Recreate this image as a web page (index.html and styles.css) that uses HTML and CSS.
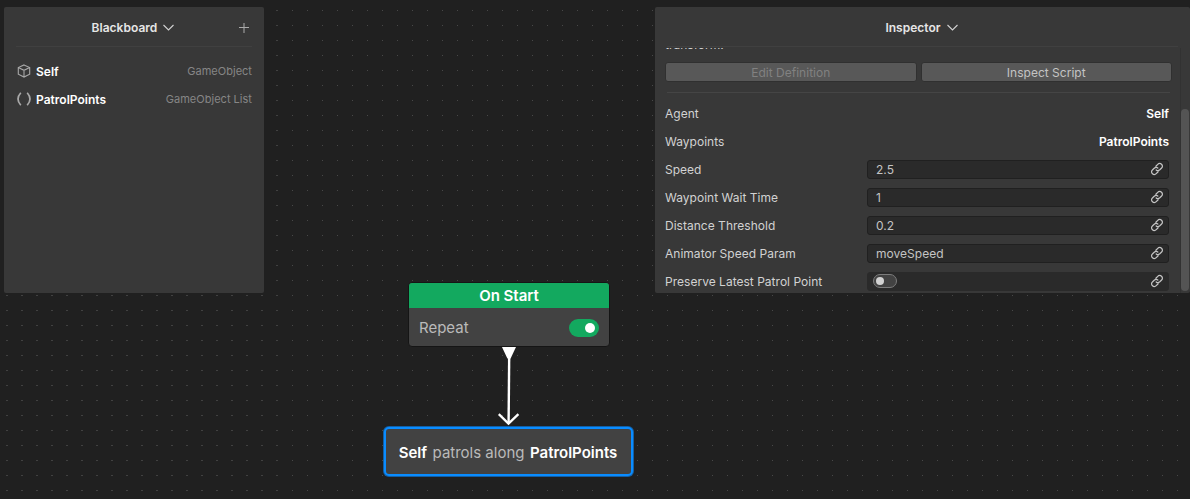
FILE: index.html
```html
<!DOCTYPE html>
<html lang="en">
<head>
<meta charset="utf-8">
<title>Behavior Graph</title>
<link rel="stylesheet" href="styles.css">
</head>
<body>
<svg class="defs" width="0" height="0">
  <symbol id="link" viewBox="0 0 14 14">
    <g fill="none" stroke="#c4c4c4" stroke-width="1.25" stroke-linecap="round">
      <path d="M5.9 4.3 7.5 2.6C8.7 1.3 10.4 1.2 11.5 2.2S12.8 4.9 11.6 6L9.8 7.8C8.7 8.8 7.2 8.9 6.2 8"/>
      <path d="M8.1 9.7 6.5 11.4C5.3 12.7 3.6 12.8 2.5 11.8S1.2 9.1 2.4 8L4.2 6.2C5.3 5.2 6.8 5.1 7.8 6"/>
    </g>
  </symbol>
  <symbol id="chevron" viewBox="0 0 11 7">
    <path d="M.5 1 5.5 6 10.5 1" fill="none" stroke="#d2d2d2" stroke-width="1.1"/>
  </symbol>
</svg>
<main class="canvas">
  <div class="dots dots-wide"></div>
  <div class="dots dots-fine"></div>
  <section class="node start">
    <h2 class="start-title">On Start</h2>
    <div class="start-body"><span>Repeat</span><span class="switch on"></span></div>
  </section>
  <svg class="edge" width="26" height="80" viewBox="0 0 26 80">
    <path d="M6 0H20L14.6 11.500H11.4Z" fill="#fff"/>
    <path d="M13.2 8 12.6 76" stroke="#fff" stroke-width="2.4"/>
    <path d="M2.8 67.2 12.5 76.6 22.4 67.2" fill="none" stroke="#fff" stroke-width="2.3"/>
  </svg>
  <section class="node action"><b>Self</b><span>patrols along</span><b>PatrolPoints</b></section>

  <div class="panels">
    <aside class="panel blackboard">
      <header class="head"><h1>Blackboard</h1><svg class="chev"><use href="#chevron"/></svg>
        <svg class="plus" viewBox="0 0 10 10"><path d="M0 4.500H10M5 0V10" stroke="#aaa" stroke-width="1"/></svg>
      </header>
      <ul class="vars">
        <li>
          <svg class="icon" viewBox="0 0 14 14"><path d="M7 .9 12.7 3.6V10.2L7 13.1 1.3 10.2V3.6ZM1.3 3.6 7 6.3 12.7 3.6M7 6.3V13.1" fill="none" stroke="#a8a8a8" stroke-width="1.1"/></svg>
          <b>Self</b><span class="type">GameObject</span>
        </li>
        <li>
          <svg class="icon" viewBox="0 0 14 14"><path d="M3.8 .7Q-1.8 7 3.8 13.3M10.2 .7Q15.8 7 10.2 13.3" fill="none" stroke="#a8a8a8" stroke-width="1.7"/></svg>
          <b>PatrolPoints</b><span class="type">GameObject List</span>
        </li>
      </ul>
    </aside>
    <aside class="panel inspector">
      <header class="head"><h1>Inspector</h1><svg class="chev"><use href="#chevron"/></svg></header>
      <div class="scroll">
        <div class="content">
          <p class="desc">transform.</p>
          <div class="buttons"><button class="btn" disabled>Edit Definition</button><button class="btn">Inspect Script</button></div>
          <div class="row"><span>Agent</span><b>Self</b></div>
          <div class="row"><span>Waypoints</span><b>PatrolPoints</b></div>
          <div class="row"><span>Speed</span><div class="field"><span>2.5</span><svg class="link"><use href="#link"/></svg></div></div>
          <div class="row"><span>Waypoint Wait Time</span><div class="field"><span>1</span><svg class="link"><use href="#link"/></svg></div></div>
          <div class="row"><span>Distance Threshold</span><div class="field"><span>0.2</span><svg class="link"><use href="#link"/></svg></div></div>
          <div class="row"><span>Animator Speed Param</span><div class="field"><span>moveSpeed</span><svg class="link"><use href="#link"/></svg></div></div>
          <div class="row"><span>Preserve Latest Patrol Point</span><div class="field flat"><i class="switch off"></i><svg class="link"><use href="#link"/></svg></div></div>
        </div>
        <div class="track"><div class="thumb"></div></div>
      </div>
    </aside>
  </div>
</main>
</body>
</html>
```

FILE: styles.css
```css
* { box-sizing: border-box; }
body { margin: 0; background: #202020; color: #d2d2d2; font: 12px/16px Inter, sans-serif; letter-spacing: .02px; }
h1, h2, p, ul { margin: 0; padding: 0; }
b, h1, h2 { font-weight: 600; color: #fff; }
.defs { position: absolute; }
.canvas { position: relative; width: 1190px; height: 499px; overflow: hidden; }

/* background grid */
.dots { position: absolute; top: 10px; bottom: 0; }
.dots-wide { left: 6px; width: 272px; background: conic-gradient(from 0deg at 2px 1px, transparent 270deg, #414141 0) 0 0 / 15px 15px; }
.dots-fine { left: 292px; right: 0; background: conic-gradient(from 0deg at 1px 1px, transparent 270deg, #484848 0) 0 0 / 15px 15px; }

/* panels */
.panels { position: relative; display: flex; justify-content: space-between; padding: 7px 0 0 4px; }
.panel { height: 286px; background: #383838; border-radius: 2px; overflow: hidden; }
.blackboard { width: 260px; }
.inspector { width: 535px; display: flex; flex-direction: column; }
.head { position: relative; height: 40px; flex: none; margin: 0 12px; border-bottom: 1px solid #404040; display: flex; align-items: center; justify-content: center; gap: 6px; padding: 2px 2px 0 0; }
.head h1 { font-size: 12px; color: #e6e6e6; }
.chev { width: 11px; height: 7px; }
.plus { position: absolute; right: 3px; top: 16px; width: 10px; height: 10px; }
.vars { list-style: none; padding: 10px 12px 0 13px; }
.vars li { height: 28px; display: flex; align-items: center; gap: 5px; }
.vars b { padding-top: 2px; }
.icon { width: 14px; height: 14px; }
.type { margin-left: auto; color: #868686; font-size: 11px; }

/* inspector body */
.scroll { flex: 1; margin-top: 1px; display: flex; min-height: 0; overflow: hidden; }
.content { flex: 1; padding: 0 11px 0 10px; }
.desc { margin-top: -10px; height: 24px; line-height: 14px; }
.buttons { position: relative; display: flex; gap: 4px; height: 31px; margin-right: -3px; padding-bottom: 11px; margin-bottom: 6px; }
.buttons::after { content: ""; position: absolute; left: 2px; right: 2px; bottom: 0; height: 1px; background: #454545; }
.btn { flex: 1; height: 20px; padding: 1px 0 0; border: 1px solid #303030; border-radius: 3px; background: #585858; color: #c4c4c4; font: inherit; letter-spacing: inherit; }
.btn:disabled { color: #818181; }
.row { height: 28px; display: flex; align-items: center; justify-content: space-between; }
.row span, .row b { padding-top: 2px; }
.field { width: 302px; height: 19px; display: flex; align-items: center; justify-content: space-between; padding: 0 4px 0 8px; border: 1px solid #202020; border-radius: 3px; background: #2a2a2a; color: #c4c4c4; }
.flat { border-color: #2a2a2a; padding-left: 5px; }
.link { width: 14px; height: 14px; }
.track { width: 10px; border-left: 1px solid #323232; padding: 61px 1px 2px 0; }
.thumb { height: 182px; border-radius: 4px; background: #545454; }

/* graph nodes */
.node { position: absolute; background: #424242; font-size: 15px; line-height: 20px; color: #bababa; letter-spacing: 0; }
.start { left: 408px; top: 282px; width: 202px; height: 65px; border: 1px solid #151515; border-radius: 4px; overflow: hidden; }
.start-title { height: 25px; line-height: 26px; font-size: 15px; text-align: center; background: #13a95f; }
.start-body { height: 39px; padding: 0 10px; display: flex; align-items: center; justify-content: space-between; }
.switch { display: flex; align-items: center; }
.on { width: 30px; height: 18px; border-radius: 9px; background: #13a95f; justify-content: flex-end; padding-right: 4px; }
.on::after { content: ""; width: 10px; height: 10px; border-radius: 50%; background: #fff; }
.off { width: 24px; height: 14px; border: 1px solid #7c7c7c; border-radius: 7px; background: #424242; padding-left: 2px; }
.off::after { content: ""; width: 8px; height: 8px; border-radius: 50%; background: #d2d2d2; }
.edge { position: absolute; left: 496px; top: 347px; }
.action { left: 384px; top: 427px; width: 249px; height: 49px; border: 2px solid #0a8cff; border-radius: 5px; box-shadow: 0 0 0 1px #125fa5; display: flex; align-items: center; justify-content: center; gap: 5.5px; padding: 2px 1px 0 0; }
```
